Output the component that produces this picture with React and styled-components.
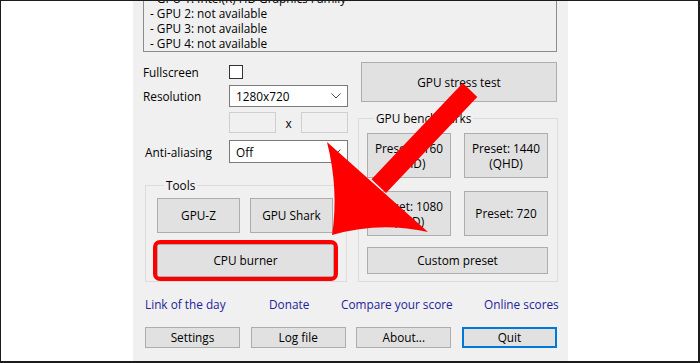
import React from "react";
import styled, { createGlobalStyle } from "styled-components";

const GlobalStyle = createGlobalStyle`
  html, body { margin: 0; padding: 0; background: #fff; }
  #root { width: 700px; height: 363px; }
`;

const Frame = styled.div`
  position: relative;
  width: 700px;
  height: 363px;
  box-sizing: border-box;
  border-style: solid;
  border-color: #1c1c1c;
  border-width: 1px 2px 2px 1px;
  background: #fff;
  overflow: hidden;
  font-family: "Open Sans", "Noto Sans", sans-serif;
  font-size: 11.8px;
  color: #000;
`;

const Window = styled.div`
  margin-left: 132px;
  width: 435px;
  height: 100%;
  box-sizing: border-box;
  background: #f0f0f0;
  padding: 0 10px 0 10px;
  display: flex;
  flex-direction: column;
`;

const ListBox = styled.div`
  height: 51px;
  box-sizing: border-box;
  width: 414px;
  border: 1px solid #8c8c8c;
  border-top: none;
  overflow: hidden;
  display: flex;
  flex-direction: column;
  justify-content: flex-end;
  padding-left: 6px;
`;

const ListLine = styled.div`
  line-height: 15px;
  height: 15px;
  white-space: nowrap;
  flex-shrink: 0;
`;

const Columns = styled.div`
  display: grid;
  grid-template-columns: 205px 200px;
  column-gap: 10px;
  align-items: start;
`;

const Column = styled.div`
  display: flex;
  flex-direction: column;
`;

const FieldRow = styled.div`
  display: grid;
  grid-template-columns: 86px 119px;
  align-items: center;
  height: ${(p) => p.$h}px;
  margin-top: ${(p) => p.$mt}px;
`;

const Label = styled.span`
  padding-left: ${(p) => p.$indent || 0}px;
  white-space: nowrap;
  line-height: 14px;
`;

const Checkbox = styled.span`
  display: block;
  width: 14px;
  height: 14px;
  box-sizing: border-box;
  border: 1px solid #333;
  background: #fff;
`;

const Select = styled.div`
  height: 100%;
  box-sizing: border-box;
  border: 1px solid #7a7a7a;
  background: #fff;
  display: flex;
  align-items: center;
  justify-content: space-between;
  padding: 0 6px 0 6px;
`;

const SizeInputs = styled.div`
  display: grid;
  grid-template-columns: 47px 25px 47px;
  height: 100%;
  align-items: center;
`;

const DisabledInput = styled.span`
  display: block;
  height: 100%;
  box-sizing: border-box;
  border: 1px solid #cfcfcf;
  background: #f0f0f0;
`;

const Times = styled.span`
  text-align: center;
  line-height: 14px;
`;

const Group = styled.fieldset`
  margin: ${(p) => p.$margin};
  width: ${(p) => p.$w}px;
  box-sizing: border-box;
  padding: ${(p) => p.$pad};
  border: 1px solid #dcdcdc;
  min-width: 0;
  display: flex;
  flex-direction: column;
`;

const GroupTitle = styled.legend`
  margin-left: 7px;
  padding: 0 2px;
  font-size: 11.8px;
  line-height: 14px;
`;

const Button = styled.button`
  font: inherit;
  color: #000;
  margin: 0;
  padding: 0;
  box-sizing: border-box;
  width: ${(p) => (p.$w ? `${p.$w}px` : "100%")};
  height: ${(p) => p.$h}px;
  background: #e1e1e1;
  border: ${(p) => (p.$focused ? "2px solid #0078d7" : "1px solid #adadad")};
  line-height: 15px;
  white-space: pre-line;
  position: relative;
`;

const Highlight = styled.span`
  position: absolute;
  left: -5px;
  right: -5px;
  top: -5px;
  bottom: -5px;
  border: 4px solid #f00;
  border-radius: 7px;
  pointer-events: none;
`;

const ButtonPair = styled.div`
  display: grid;
  grid-template-columns: ${(p) => p.$w}px ${(p) => p.$w}px;
  column-gap: ${(p) => p.$gap}px;
  margin-top: ${(p) => p.$mt || 0}px;
`;

const StressButton = styled(Button)`
  margin: 10px 1px 0 3px;
  width: auto;
`;

const Spaced = styled.div`
  margin-top: ${(p) => p.$mt}px;
`;

const LinksRow = styled.div`
  display: grid;
  grid-template-columns: 124px 72px 143px 1fr;
  margin-top: 15px;
  padding-left: 2px;
  line-height: 14px;
  height: 14px;
`;

const Link = styled.a`
  color: #23239b;
  text-decoration: none;
  white-space: nowrap;
  text-align: ${(p) => p.$align || "left"};
`;

const BottomRow = styled.div`
  display: flex;
  justify-content: space-between;
  margin-top: 16px;
  padding-left: 2px;
  width: 414px;
  box-sizing: border-box;
`;

const ArrowLayer = styled.svg`
  position: absolute;
  left: -1px;
  top: -1px;
  width: 700px;
  height: 363px;
  pointer-events: none;
`;

function Chevron() {
  return (
    <svg width="10" height="6" viewBox="0 0 10 6">
      <path d="M0.5 0.5 L5 5 L9.5 0.5" fill="none" stroke="#4a4a4a" strokeWidth="1" />
    </svg>
  );
}

export default function App() {
  return (
    <>
      <GlobalStyle />
      <Frame>
        <Window>
          <ListBox>
            <ListLine>- GPU 1: Intel(R) HD Graphics Family</ListLine>
            <ListLine>- GPU 2: not available</ListLine>
            <ListLine>- GPU 3: not available</ListLine>
            <ListLine>- GPU 4: not available</ListLine>
          </ListBox>
          <Columns>
            <Column>
              <FieldRow $h={14} $mt={13}>
                <Label>Fullscreen</Label>
                <Checkbox />
              </FieldRow>
              <FieldRow $h={22} $mt={6}>
                <Label>Resolution</Label>
                <Select>
                  <span>1280x720</span>
                  <Chevron />
                </Select>
              </FieldRow>
              <FieldRow $h={21} $mt={5}>
                <span />
                <SizeInputs>
                  <DisabledInput />
                  <Times>x</Times>
                  <DisabledInput />
                </SizeInputs>
              </FieldRow>
              <FieldRow $h={23} $mt={7}>
                <Label $indent={2}>Anti-aliasing</Label>
                <Select>
                  <span>Off</span>
                  <Chevron />
                </Select>
              </FieldRow>
              <Group $margin="15px 0 0 2px" $w={202} $pad="6px 12px 4px 11px">
                <GroupTitle>Tools</GroupTitle>
                <ButtonPair $w={83} $gap={10}>
                  <Button $h={35}>GPU-Z</Button>
                  <Button $h={35}>GPU Shark</Button>
                </ButtonPair>
                <Spaced $mt={11}>
                  <Button $h={33}>
                    CPU burner
                    <Highlight />
                  </Button>
                </Spaced>
              </Group>
            </Column>
            <Column>
              <StressButton $h={40}>GPU stress test</StressButton>
              <Group $margin="9px 0 0 0" $w={200} $pad="8px 9px 7px 8px">
                <GroupTitle>GPU benchmarks</GroupTitle>
                <ButtonPair $w={84} $gap={13}>
                  <Button $h={45}>{"Preset: 2160\n(UHD)"}</Button>
                  <Button $h={45}>{"Preset: 1440\n(QHD)"}</Button>
                </ButtonPair>
                <ButtonPair $w={84} $gap={13} $mt={13}>
                  <Button $h={45}>{"Preset: 1080\n(FHD)"}</Button>
                  <Button $h={45}>Preset: 720</Button>
                </ButtonPair>
                <Spaced $mt={11}>
                  <Button $h={27}>Custom preset</Button>
                </Spaced>
              </Group>
            </Column>
          </Columns>
          <LinksRow>
            <Link href="#">Link of the day</Link>
            <Link href="#">Donate</Link>
            <Link href="#">Compare your score</Link>
            <Link href="#" $align="right">Online scores</Link>
          </LinksRow>
          <BottomRow>
            <Button $w={95} $h={21}>Settings</Button>
            <Button $w={95} $h={21}>Log file</Button>
            <Button $w={95} $h={21}>About...</Button>
            <Button $w={95} $h={21} $focused>Quit</Button>
          </BottomRow>
        </Window>
        <ArrowLayer viewBox="0 0 700 363">
          <polygon points="462.8,83.1 477.3,96.9 386,193 371.5,179.2" fill="#f00" />
          <path d="M327 142 Q339 190 332 235 Q380 221 428 232 Z" fill="#f00" />
        </ArrowLayer>
      </Frame>
    </>
  );
}
